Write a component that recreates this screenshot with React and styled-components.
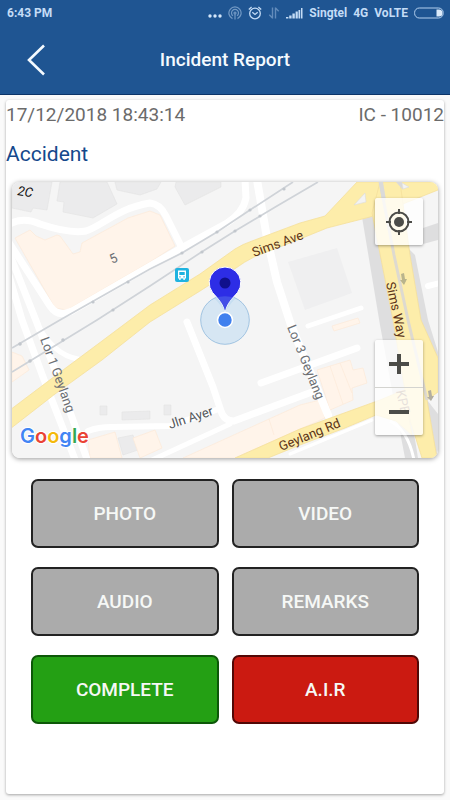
import styled, { createGlobalStyle } from 'styled-components';

const GlobalStyle = createGlobalStyle`
  * {
    box-sizing: border-box;
  }

  body {
    margin: 0;
    background: #fafafa;
    font-family: Roboto, 'Liberation Sans', sans-serif;
  }
`;

const Screen = styled.div`
  display: flex;
  flex-direction: column;
  min-height: 100vh;
`;

const Header = styled.header`
  background: #1f5592;
  border-bottom: 1px solid #0c3468;
`;

const StatusBar = styled.div`
  display: flex;
  align-items: center;
  gap: 6px;
  height: 25px;
  padding: 0 6px 0 7px;
  color: #c4dcf6;
  font-size: 12px;
  font-weight: 700;
  line-height: 24px;
`;

const Clock = styled.span`
  margin-right: auto;
`;

const StatusIcon = styled.svg`
  flex: none;
  opacity: ${(props) => (props.$dim ? 0.5 : 1)};
`;

const NavBar = styled.div`
  display: grid;
  grid-template-columns: 72px 1fr 72px;
  align-items: center;
  height: 69px;
`;

const BackButton = styled.button`
  display: flex;
  justify-content: center;
  padding: 0;
  border: none;
  background: none;
  cursor: pointer;
`;

const Title = styled.h1`
  margin: 0;
  color: #f4faff;
  font-size: 19px;
  font-weight: 500;
  text-align: center;
`;

const Card = styled.main`
  flex: 1;
  margin: 5px 6px 6px;
  background: #fff;
  border-radius: 3px;
  box-shadow: 0 1px 3px rgba(0, 0, 0, 0.35);
`;

const MetaRow = styled.div`
  display: flex;
  justify-content: space-between;
  color: #6b6b6b;
  font-size: 19px;
  line-height: 30px;
`;

const IncidentType = styled.h2`
  margin: 8px 0 12px;
  color: #14488c;
  font-size: 21px;
  font-weight: 400;
  line-height: 32px;
`;

const MapBox = styled.section`
  position: relative;
  height: 276px;
  margin: 0 6px;
  overflow: hidden;
  border-radius: 8px;
  box-shadow: 0 1px 5px rgba(0, 0, 0, 0.4);
`;

const MapCanvas = styled.svg`
  display: block;
  width: 100%;
  height: 100%;
`;

const MapControls = styled.div`
  position: absolute;
  right: 15px;
  ${(props) => (props.$bottom ? 'bottom: 23px;' : 'top: 16px;')}
  width: 48px;
  border-radius: 2px;
  background: rgba(255, 255, 255, 0.78);
  box-shadow: 0 1px 3px rgba(0, 0, 0, 0.35);
`;

const MapButton = styled.button`
  display: flex;
  align-items: center;
  justify-content: center;
  width: 100%;
  height: 47px;
  padding: 0;
  border: none;
  background: none;
  cursor: pointer;

  & + & {
    height: 48px;
    border-top: 1px solid #d4d4d0;
  }
`;

const Actions = styled.div`
  display: grid;
  grid-template-columns: 1fr 1fr;
  gap: 19px 13px;
  padding: 21px 25px 24px;
`;

const tones = {
  grey: { fill: '#ababab', edge: '#222' },
  green: { fill: '#24a014', edge: '#0d5808' },
  red: { fill: '#cb1a11', edge: '#520806' },
};

const ActionButton = styled.button`
  height: 69px;
  padding: 0;
  border: 2px solid ${(props) => tones[props.$tone].edge};
  border-radius: 7px;
  background: ${(props) => tones[props.$tone].fill};
  color: #f6f8f6;
  font-family: inherit;
  font-size: 19px;
  font-weight: 500;
  cursor: pointer;
`;

const actions = [
  { label: 'PHOTO', tone: 'grey' },
  { label: 'VIDEO', tone: 'grey' },
  { label: 'AUDIO', tone: 'grey' },
  { label: 'REMARKS', tone: 'grey' },
  { label: 'COMPLETE', tone: 'green' },
  { label: 'A.I.R', tone: 'red' },
];

const StatusIcons = () => (
  <>
    <StatusIcon width="14" height="14" viewBox="0 0 14 14" fill="#d4e6fa">
      <circle cx="2" cy="10" r="1.7" />
      <circle cx="7" cy="10" r="1.7" />
      <circle cx="12" cy="10" r="1.7" />
    </StatusIcon>
    <StatusIcon $dim width="14" height="14" viewBox="0 0 14 14" fill="none" stroke="#c4dcf6" strokeWidth="1.2">
      <path d="M4.5 12.6a6.1 6.1 0 1 1 5 0" />
      <path d="M5 9.8a3.5 3.5 0 1 1 4 0" />
      <circle cx="7" cy="7" r="1" />
      <path d="M7 8v5.5" />
    </StatusIcon>
    <StatusIcon width="14" height="14" viewBox="0 0 14 14" fill="none" stroke="#c4dcf6" strokeWidth="1.3">
      <circle cx="7" cy="7.5" r="5.3" />
      <path d="M4.3 6.3L7 8.5l2.7-2.2M.8 3.4L3.6.9M13.2 3.4L10.4.9" />
    </StatusIcon>
    <StatusIcon $dim width="12" height="14" viewBox="0 0 12 14" fill="none" stroke="#a4c2e4" strokeWidth="1.4">
      <path d="M4.5 1.500v11M4.7 12.3L1.3 8.8M7.5 12.5v-11M7.3 1.7l3.4 3.5" />
    </StatusIcon>
    <StatusIcon width="17" height="14" viewBox="0 0 17 14" fill="#c4dcf6">
      <path d="M0 12.500h2.400V11H0zM3.200 12.500h2.400V9.500H3.200zM6.400 12.500h2.400V7.500H6.400zM9.600 12.500h2.200V5.500H9.600zM12.500 12.500h1.700V4h-1.700zM15 12.500h1.500V2H15z" />
    </StatusIcon>
  </>
);

const Battery = () => (
  <StatusIcon width="30" height="12" viewBox="0 0 30 12">
    <rect x="0.6" y="1" width="28.6" height="10" rx="4.6" fill="none" stroke="#b4d0ee" strokeWidth="1" />
    <path d="M22.5 2.5H25a3.4 3.4 0 0 1 0 7h-2.5z" fill="#dcebfa" />
  </StatusIcon>
);

const StreetMap = () => (
  <MapCanvas viewBox="12 182 426 276" preserveAspectRatio="xMidYMid slice" role="img" aria-label="Incident location">
    <rect x="12" y="182" width="426" height="276" fill="#f5f5f5" />

    {/* buildings */}
    <g fill="#ebebec" stroke="#e2e2e3" strokeWidth="0.6">
      <path d="M12 182H52L47 210 33 208 31 212 12 208z" />
      <path d="M60 182H107L117 204 93 218 63 212 64 202 57 201z" />
      <path d="M115 182H161L157 189 140 195 117 190z" />
      <path d="M176 182H221V187L185 205 175 187z" />
      <path d="M118 438L133 435 138 450 123 455z" />
      <path d="M100 406h7v9h-7zM122 412l28-1v8l-28 1zM164 405h7v10h-7z" />
    </g>
    <path d="M288 262L337 248 352 293 305 310z" fill="#efeff0" />
    <g fill="#fff4ea" stroke="#fce9d8" strokeWidth="0.7">
      <path d="M15 238L30 230 36 236 45 240 57 235 60 236 73 254 80 252 82 243 128 218 150 211 160 215 175 246 150 262 67 310 55 308z" />
      <path d="M12 352L22 356 29 370 12 382z" />
      <path d="M88 440L115 432 122 458 90 458z" />
      <path d="M133 438L155 430 162 448 140 458z" />
      <path d="M317 370L350 360 353 370 363 368 367 383 352 388 353 400 330 410zM330 366l13 38M340 363l12 30" />
      <path d="M332 326L358 318 360 323 334 331z" />
      <path d="M183 458L300 405 320 400 325 418 235 458zM269 419l5 16" />
    </g>

    {/* minor roads */}
    <g fill="none" stroke="#fff" strokeWidth="7" strokeLinecap="round" strokeLinejoin="round">
      <path d="M8 225Q22 216 40 224Q70 234 86 231C102 226 118 208 150 203Q160 204 166 216L182 248" />
      <path d="M8 241L50 306Q58 318 72 311L183 247 227 223Q243 213 246 198L245 180" />
      <path d="M8 272L22 320 43 377 76 462" />
      <path d="M8 250L35 318 55 370 88 462" />
      <path d="M36 322Q53 355 78 359" strokeWidth="5" />
      <path d="M257 180L267 238 277 282 291 325 328 415" strokeWidth="8" />
      <path d="M187 322L213 387 221 411Q224 421 234 421L312 392" />
      <path d="M230 424L150 461" strokeWidth="5" />
      <path d="M88 431Q98 427 112 427L170 426 216 410" strokeWidth="6" />
      <path d="M261 383L357 348" />
      <path d="M308 326L361 308" strokeWidth="5" />
      <path d="M428 286L440 283" strokeWidth="6" />
      <path d="M290 454L372 420" strokeWidth="3" />
    </g>

    {/* railway */}
    <g fill="none" stroke="#cfd3d8" strokeWidth="1.7">
      <path d="M12 348L60 320 150 269 182 253 217 232 250 210 293 182" />
      <path d="M12 372L97 320 150 286 200 253 235 231 277 206 318 182" />
    </g>
    <g fill="#c2c7cd">
      <circle cx="20" cy="344" r="1.8" />
      <circle cx="30" cy="361" r="1.8" />
      <circle cx="63" cy="340" r="1.8" />
      <circle cx="93" cy="302" r="1.6" />
      <circle cx="128" cy="282" r="1.6" />
      <circle cx="113" cy="310" r="1.6" />
      <circle cx="182" cy="253" r="1.6" />
      <circle cx="217" cy="232" r="1.6" />
      <circle cx="250" cy="210" r="1.6" />
      <circle cx="202" cy="252" r="1.6" />
      <circle cx="235" cy="231" r="1.6" />
      <circle cx="260" cy="216" r="1.6" />
      <circle cx="284" cy="189" r="1.6" />
    </g>

    {/* grey shoulders of the highway */}
    <g fill="#dededf">
      <path d="M362 217L374 212 397 325 407 390 418 458 405 458 392 390 380 325z" />
      <path d="M405 245L415 255 428 320 438 352V362L420 325z" />
      <path d="M423 228L438 223V240L423 244z" />
      <path d="M424 396L438 414V458H430z" />
    </g>

    {/* main roads */}
    <g fill="#fdedaa" stroke="#f5e09c" strokeWidth="0.8">
      <path d="M10 410L55 376 102 341 150 305 200 274 235 249Q243 244 252 241L300 223 325 216 357 182H438V190L370 217 327 228 300 239 254 257Q244 262 236 268L200 291 150 322 102 360 55 394 10 429z" />
      <path d="M235 458L300 429 380 400 404 390 412 435 396 421 376 415 345 428 300 445 268 458z" />
      <path d="M372 213L393 320 410 420 422 458H437L427 400 438 392V358L421 320 410 255 400 182H380z" />
    </g>
    <path d="M380 182L394 255 408 320 427 400" fill="none" stroke="#dedad0" strokeWidth="3" />
    <path d="M390 421Q408 430 414 460" fill="none" stroke="#fff" strokeWidth="3" />
    <path d="M379 182h4l3 18h-4zM396 182h6l1 8z" fill="#dadada" />
    <path d="M354 205L365 193 366 202zM402 183L409 187 403 189z" fill="#f3f3f3" stroke="#dcdcdc" strokeWidth="0.6" />
    <g fill="#b9b48c">
      <path d="M401 274l3-1 1 6h2l-3 6-4-5h2z" />
      <path d="M428 391l3-1 1 6h2l-3 5-4-4h2z" fill="#b2aea0" />
    </g>

    {/* street names */}
    <g fontFamily="Roboto, 'Liberation Sans', sans-serif" fontSize="13" fill="#6c6f74">
      <text transform="translate(17 195) rotate(9)" fill="#111" fontStyle="italic">2C</text>
      <text transform="translate(112 264) rotate(-25)">5</text>
      <text transform="translate(254 257) rotate(-20)" fill="#5b3317">Sims Ave</text>
      <text transform="translate(386 283) rotate(78)" fill="#5b3317">Sims Way</text>
      <text transform="translate(40 339) rotate(70)">Lor 1 Geylang</text>
      <text transform="translate(287 327) rotate(68)">Lor 3 Geylang</text>
      <text transform="translate(170 429) rotate(-18)" fill="#55585c">Jln Ayer</text>
      <text transform="translate(281 451) rotate(-22)" fill="#5b3317">Geylang Rd</text>
      <text transform="translate(396 391) rotate(78)" fill="#94765e">KPE</text>
    </g>

    {/* bus stop */}
    <rect x="175" y="268" width="14" height="14" rx="2" fill="#1fb3e0" />
    <path d="M178 270.5h8v8h-1.2v1.5h-1.4v-1.5h-2.8v1.5h-1.4v-1.5H178z" fill="#fff" />
    <path d="M179.3 272h5.4v3h-5.4zM179.3 276.3h1.3v1.2h-1.3zM183.4 276.3h1.3v1.2h-1.3z" fill="#1fb3e0" />

    {/* pin over the current position */}
    <circle cx="225" cy="320" r="24.300" fill="#8fc4ee" fillOpacity="0.3" stroke="#8fb9dc" strokeWidth="0.8" />
    <path d="M225 313C223 303 218 299 212.500 292.500A15.800 15.800 0 1 1 237.500 292.500C232 299 227 303 225 313z" fill="#2d2de6" stroke="#fff" strokeWidth="1" />
    <circle cx="225" cy="283" r="5.500" fill="#10108c" />
    <path d="M214.500 298.500Q225 294 235.500 298.500Q228 306 225 313Q222 306 214.500 298.500z" fill="#8fc4ee" fillOpacity="0.22" />
    <circle cx="225" cy="320" r="7.500" fill="#4080ee" stroke="#fff" strokeWidth="1.6" />

    <text
      x="20"
      y="443"
      fontFamily="Inter, sans-serif"
      fontSize="20"
      fontWeight="600"
      stroke="#fff"
      strokeWidth="2"
      strokeLinejoin="round"
      paintOrder="stroke"
    >
      <tspan fill="#4285f4">G</tspan>
      <tspan fill="#ea4335">o</tspan>
      <tspan fill="#f4b90a">o</tspan>
      <tspan fill="#4285f4">g</tspan>
      <tspan fill="#34a853">l</tspan>
      <tspan fill="#ea4335">e</tspan>
    </text>
  </MapCanvas>
);

export default function App() {
  return (
    <>
      <GlobalStyle />
      <Screen>
        <Header>
          <StatusBar>
            <Clock>6:43 PM</Clock>
            <StatusIcons />
            <span>Singtel</span>
            <span>4G</span>
            <span>VoLTE</span>
            <Battery />
          </StatusBar>
          <NavBar>
            <BackButton aria-label="Back">
              <svg width="20" height="32" viewBox="0 0 20 32" fill="none" stroke="#f4faff" strokeWidth="2.6">
                <path d="M18 1.500L3 16L18 30.500" />
              </svg>
            </BackButton>
            <Title>Incident Report</Title>
          </NavBar>
        </Header>

        <Card>
          <MetaRow>
            <span>17/12/2018 18:43:14</span>
            <span>IC - 10012</span>
          </MetaRow>
          <IncidentType>Accident</IncidentType>

          <MapBox>
            <StreetMap />
            <MapControls>
              <MapButton aria-label="My location">
                <svg width="26" height="26" viewBox="0 0 26 26" fill="none" stroke="#4c4c48" strokeWidth="2">
                  <circle cx="13" cy="13" r="9.500" />
                  <circle cx="13" cy="13" r="5" fill="#4c4c48" stroke="none" />
                  <path d="M13 0v5M13 21v5M0 13h5M21 13h5" />
                </svg>
              </MapButton>
            </MapControls>
            <MapControls $bottom>
              <MapButton aria-label="Zoom in">
                <svg width="22" height="22" viewBox="0 0 22 22" stroke="#4c4c48" strokeWidth="4">
                  <path d="M11 1v20M1 11h20" />
                </svg>
              </MapButton>
              <MapButton aria-label="Zoom out">
                <svg width="22" height="22" viewBox="0 0 22 22" stroke="#4c4c48" strokeWidth="4">
                  <path d="M1 11h20" />
                </svg>
              </MapButton>
            </MapControls>
          </MapBox>

          <Actions>
            {actions.map((action) => (
              <ActionButton key={action.label} $tone={action.tone}>
                {action.label}
              </ActionButton>
            ))}
          </Actions>
        </Card>
      </Screen>
    </>
  );
}
